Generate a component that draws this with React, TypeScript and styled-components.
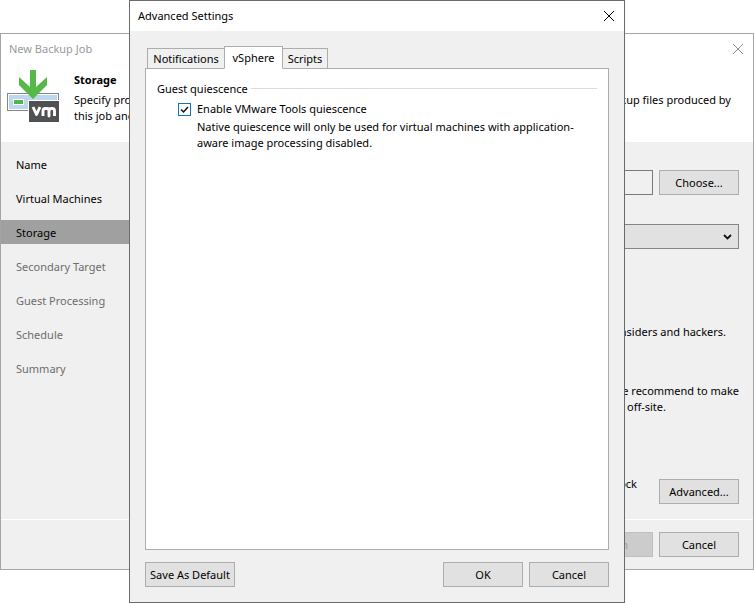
import React from "react";
import styled, { createGlobalStyle, css } from "styled-components";

const GlobalStyle = createGlobalStyle`
  *, *::before, *::after { box-sizing: border-box; }
  body {
    margin: 0;
    background: #fff;
    color: #000;
    font: 11px/16px "Noto Sans", "Open Sans", sans-serif;
  }
  button, input, select { font: inherit; color: inherit; }
  h1, h2, p, ol, fieldset { margin: 0; padding: 0; }
`;

const Desktop = styled.div`
  position: relative;
  min-height: 100vh;
  padding: 33px 0;
  display: flex;
`;

const WizardWindow = styled.main`
  flex: 1;
  min-width: 0;
  display: flex;
  flex-direction: column;
  border: 1px solid #a5a5a5;
  background: #f0f0f0;
`;

const WizardTitleBar = styled.header`
  display: flex;
  align-items: center;
  justify-content: space-between;
  height: 29px;
  padding: 0 9px 0 8px;
  background: #fff;
  color: #999;
`;

const WindowTitle = styled.h1`
  font-size: 11px;
  font-weight: 400;
`;

const CloseButton = styled.button`
  display: flex;
  padding: 0;
  border: 0;
  background: none;
`;

const StepBanner = styled.section`
  display: flex;
  gap: 14px;
  height: 79px;
  padding: 7px 22px 0 6px;
  background: #fff;
`;

const StepIcon = styled.svg`
  flex: none;
`;

const StepText = styled.div`
  flex: 1;
  min-width: 0;
`;

const StepHeading = styled.h2`
  margin-bottom: 2px;
  font-size: 11px;
  line-height: 20px;
  font-weight: 700;
`;

const SplitLine = styled.p`
  display: flex;
  justify-content: space-between;
  white-space: nowrap;
`;

const WizardBody = styled.div`
  flex: 1;
  display: flex;
`;

const StepList = styled.ol`
  flex: none;
  width: 144px;
  padding-top: 10px;
  list-style: none;
  display: flex;
  flex-direction: column;
  gap: 10px;
`;

const Step = styled.li<{ $state: "done" | "current" | "pending" }>`
  height: 24px;
  padding: 1px 0 0 15px;
  line-height: 24px;
  color: ${(p) => (p.$state === "pending" ? "#6d6d6d" : "#000")};
  background: ${(p) => (p.$state === "current" ? "#a0a0a0" : "transparent")};
`;

const StepContent = styled.div`
  flex: 1;
  min-width: 0;
  display: flex;
  flex-direction: column;
  align-items: stretch;
  padding: 28px 14px 15px 16px;
`;

const FieldRow = styled.div`
  display: flex;
  gap: 6px;
`;

const TextField = styled.input`
  flex: 1;
  min-width: 0;
  height: 25px;
  border: 1px solid #7a7a7a;
  background: #f0f0f0;
`;

const SelectWrap = styled.div`
  display: grid;
  align-items: center;
  margin-top: 29px;
  > * { grid-area: 1 / 1; }
`;

const SelectField = styled.select`
  appearance: none;
  width: 100%;
  height: 25px;
  border: 1px solid #858585;
  border-radius: 0;
  background: #e1e1e1;
`;

const SelectArrow = styled.svg`
  justify-self: end;
  margin-right: 7px;
  pointer-events: none;
`;

const Hint = styled.p<{ $gapAbove: number; $inset: number }>`
  margin-top: ${(p) => p.$gapAbove}px;
  padding-right: ${(p) => p.$inset}px;
  text-align: right;
  white-space: nowrap;
`;

const AdvancedRow = styled.div`
  display: flex;
  align-items: flex-end;
  justify-content: flex-end;
  gap: 22px;
  margin-top: auto;
`;

const AdvancedHint = styled.p`
  padding-bottom: 12px;
`;

const Button = styled.button<{ $wide?: boolean }>`
  flex: none;
  width: ${(p) => (p.$wide ? 90 : 80)}px;
  height: 25px;
  padding: 0;
  border: 1px solid #adadad;
  background: #e1e1e1;
  white-space: nowrap;
  &:disabled {
    border-color: #bfbfbf;
    background: #ccc;
    color: #a0a0a0;
  }
`;

const WizardFooter = styled.footer`
  display: flex;
  justify-content: flex-end;
  gap: 6px;
  padding: 12px 14px;
  border-top: 1px solid #fff;
`;

const DialogLayer = styled.div`
  position: absolute;
  inset: 0 129px;
  display: flex;
`;

const Dialog = styled.div`
  flex: 1;
  min-width: 0;
  display: flex;
  flex-direction: column;
  border: 1px solid #6b6b6b;
  background: #f0f0f0;
`;

const DialogTitleBar = styled.header`
  display: flex;
  align-items: center;
  justify-content: space-between;
  height: 30px;
  padding: 0 9px 0 8px;
  background: #fff;
`;

const DialogBody = styled.div`
  flex: 1;
  display: flex;
  flex-direction: column;
  padding: 15px 15px 12px;
`;

const TabStrip = styled.div`
  display: flex;
  align-items: flex-end;
  height: 23px;
  padding-left: 2px;
  margin-bottom: -1px;
`;

const Tab = styled.button<{ $width: number }>`
  width: ${(p) => p.$width}px;
  height: 21px;
  padding: 0;
  border: 1px solid #adadad;
  background: #f0f0f0;
  white-space: nowrap;
  ${(p) =>
    p["aria-selected"] &&
    css`
      height: 23px;
      margin: 0 -1px;
      z-index: 1;
      border-bottom-color: #fff;
      background: #fff;
    `}
`;

const TabPanel = styled.section`
  flex: 1;
  padding: 12px 11px;
  border: 1px solid #adadad;
  background: #fff;
`;

const Group = styled.fieldset`
  border: 0;
  min-width: 0;
`;

const GroupLegend = styled.legend`
  display: flex;
  align-items: center;
  gap: 3px;
  width: 100%;
  padding: 0;
  &::after {
    content: "";
    flex: 1;
    height: 1px;
    margin-bottom: 1px;
    background: #dcdcdc;
  }
`;

const CheckRow = styled.div`
  display: grid;
  grid-template-columns: 13px 1fr;
  column-gap: 6px;
  align-items: center;
  padding: 4px 0 0 21px;
`;

const CheckBoxWrap = styled.span`
  display: grid;
  > * { grid-area: 1 / 1; }
`;

const CheckBox = styled.input`
  appearance: none;
  width: 13px;
  height: 13px;
  margin: 0;
  border: 1px solid #0f75b5;
  background: #fff;
  &:not(:checked) + svg { visibility: hidden; }
`;

const CheckMark = styled.svg`
  pointer-events: none;
`;

const CheckHelp = styled.p`
  grid-column: 2;
  padding-top: 2px;
`;

const DialogFooter = styled.footer`
  display: flex;
  gap: 6px;
  padding: 0 15px 15px;
`;

const Spacer = styled.span`
  flex: 1;
`;

const CrossIcon = ({ color }: { color: string }) => (
  <svg width="12" height="12" viewBox="0 0 12 12" aria-hidden="true">
    <path d="M1 1l10 10M11 1L1 11" stroke={color} strokeWidth="1" fill="none" />
  </svg>
);

const StorageIcon = () => (
  <StepIcon width="53" height="53" viewBox="0 0 53 53" aria-hidden="true">
    <rect x="0.5" y="23.5" width="51" height="17" fill="#fff" stroke="#858585" />
    <rect x="2" y="25" width="48" height="14" fill="#bdd7ee" />
    <rect x="6" y="29" width="11" height="6" fill="#fff" />
    <rect x="7" y="30" width="9" height="4" fill="#4db748" />
    <path d="M23 0h6v17l11-10v8L26 29 12 15V7l11 10z" fill="#55b948" />
    <rect x="21" y="30" width="31" height="22" fill="#fff" />
    <rect x="22" y="31" width="30" height="21" fill="#505153" />
    <path
      d="M26 37l3.500 7.500L33 37M36 46v-5q0-2.500 2.500-2.500h1.500q2 0 2 2.500v5v-5q0-2.500 2.500-2.500h1q2 0 2 2.500v5"
      fill="none"
      stroke="#fff"
      strokeWidth="2.900"
      strokeLinejoin="round"
    />
  </StepIcon>
);

const steps = [
  { name: "Name", state: "done" },
  { name: "Virtual Machines", state: "done" },
  { name: "Storage", state: "current" },
  { name: "Secondary Target", state: "pending" },
  { name: "Guest Processing", state: "pending" },
  { name: "Schedule", state: "pending" },
  { name: "Summary", state: "pending" },
] as const;

const tabs = [
  { name: "Notifications", width: 78 },
  { name: "vSphere", width: 59 },
  { name: "Scripts", width: 46 },
];

export default function App() {
  const [activeTab, setActiveTab] = React.useState("vSphere");

  return (
    <Desktop>
      <GlobalStyle />
      <WizardWindow>
        <WizardTitleBar>
          <WindowTitle>New Backup Job</WindowTitle>
          <CloseButton aria-label="Close wizard">
            <CrossIcon color="#8c8c8c" />
          </CloseButton>
        </WizardTitleBar>
        <StepBanner>
          <StorageIcon />
          <StepText>
            <StepHeading>Storage</StepHeading>
            <SplitLine>
              <span>Specify proxy</span>
              <span>backup files produced by</span>
            </SplitLine>
            <p>this job and</p>
          </StepText>
        </StepBanner>
        <WizardBody>
          <StepList>
            {steps.map((s) => (
              <Step key={s.name} $state={s.state}>
                {s.name}
              </Step>
            ))}
          </StepList>
          <StepContent>
            <FieldRow>
              <TextField aria-label="Backup proxy" readOnly />
              <Button>Choose...</Button>
            </FieldRow>
            <SelectWrap>
              <SelectField aria-label="Backup repository" />
              <SelectArrow width="9" height="6" viewBox="0 0 9 6" aria-hidden="true">
                <path d="M1 1l3.500 3.500L8 1" stroke="#111" strokeWidth="1.800" fill="none" />
              </SelectArrow>
            </SelectWrap>
            <Hint $gapAbove={75} $inset={13}>insiders and hackers.</Hint>
            <Hint $gapAbove={43} $inset={0}>we recommend to make</Hint>
            <Hint $gapAbove={0} $inset={73}>off-site.</Hint>
            <AdvancedRow>
              <AdvancedHint>block</AdvancedHint>
              <Button>Advanced...</Button>
            </AdvancedRow>
          </StepContent>
        </WizardBody>
        <WizardFooter>
          <Button disabled>Finish</Button>
          <Button>Cancel</Button>
        </WizardFooter>
      </WizardWindow>

      <DialogLayer>
        <Dialog role="dialog" aria-labelledby="dialog-title">
          <DialogTitleBar>
            <WindowTitle as="h2" id="dialog-title">
              Advanced Settings
            </WindowTitle>
            <CloseButton aria-label="Close">
              <CrossIcon color="#000" />
            </CloseButton>
          </DialogTitleBar>
          <DialogBody>
            <TabStrip role="tablist">
              {tabs.map((t) => (
                <Tab
                  key={t.name}
                  role="tab"
                  aria-selected={t.name === activeTab}
                  $width={t.width}
                  onClick={() => setActiveTab(t.name)}
                >
                  {t.name}
                </Tab>
              ))}
            </TabStrip>
            <TabPanel role="tabpanel">
              <Group>
                <GroupLegend>Guest quiescence</GroupLegend>
                <CheckRow>
                  <CheckBoxWrap>
                    <CheckBox type="checkbox" id="quiescence" defaultChecked />
                    <CheckMark width="13" height="13" viewBox="0 0 13 13" aria-hidden="true">
                      <path d="M3 6.500l2.500 2.500L10 4" stroke="#111" strokeWidth="1.500" fill="none" />
                    </CheckMark>
                  </CheckBoxWrap>
                  <label htmlFor="quiescence">Enable VMware Tools quiescence</label>
                  <CheckHelp>
                    Native quiescence will only be used for virtual machines with application-aware
                    image processing disabled.
                  </CheckHelp>
                </CheckRow>
              </Group>
            </TabPanel>
          </DialogBody>
          <DialogFooter>
            <Button $wide>Save As Default</Button>
            <Spacer />
            <Button>OK</Button>
            <Button>Cancel</Button>
          </DialogFooter>
        </Dialog>
      </DialogLayer>
    </Desktop>
  );
}
